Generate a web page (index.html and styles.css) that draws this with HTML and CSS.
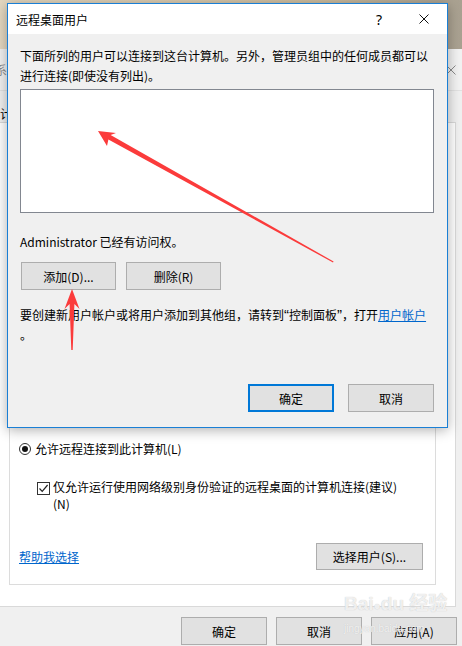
FILE: index.html
```html
<!DOCTYPE html>
<html lang="zh-CN">
<head>
    <meta charset="UTF-8">
    <title>远程桌面用户</title>
    <link rel="stylesheet" href="styles.css">
</head>
<body>
    <div class="desktop"></div>

    <div class="win">
        <div class="win-title">
            <span class="win-name">系统属性</span>
            <svg class="win-close" width="10" height="10" viewBox="0 0 10 10"><path d="M0.5 0.5L9.5 9.5M9.5 0.5L0.5 9.5" stroke="#8a8a8a" stroke-width="1"/></svg>
        </div>
        <div class="win-tabs"><span class="tab">计算机名</span></div>
        <div class="win-page">
            <div class="group">
                <div class="radio-row"><span class="radio"></span>允许远程连接到此计算机(L)</div>
                <div class="check-row">
                    <span class="check"><svg width="11" height="11" viewBox="0 0 11 11"><path d="M1.5 5.5L4.2 8.3L9.6 2" fill="none" stroke="#222" stroke-width="1.2"/></svg></span>
                    <span>仅允许运行使用网络级别身份验证的远程桌面的计算机连接(建议)<br>(N)</span>
                </div>
                <div class="users-row">
                    <a class="link" href="#">帮助我选择</a>
                    <button class="btn btn-users">选择用户(S)...</button>
                </div>
            </div>
        </div>
        <div class="win-footer">
            <button class="btn btn-win">确定</button>
            <button class="btn btn-win">取消</button>
            <button class="btn btn-win">应用(A)</button>
        </div>
    </div>

    <div class="dialog">
        <div class="dlg-title">
            <span class="dlg-name">远程桌面用户</span>
            <span class="dlg-help">?</span>
            <svg class="dlg-close" width="10" height="10" viewBox="0 0 10 10"><path d="M0.5 0.5L9.5 9.5M9.5 0.5L0.5 9.5" stroke="#111" stroke-width="1"/></svg>
        </div>
        <div class="dlg-body">
            <p class="intro">下面所列的用户可以连接到这台计算机。另外，管理员组中的任何成员都可以进行连接(即使没有列出)。</p>
            <div class="user-list"></div>
            <p class="has-access">Administrator 已经有访问权。</p>
            <div class="list-btns">
                <button class="btn btn-list">添加(D)...</button>
                <button class="btn btn-list">删除(R)</button>
            </div>
            <p class="note"><span class="nowrap">要创建新用户帐户或将用户添加到其他组，请转到<span class="q">“</span>控制面板<span class="q">”</span>，打开<a class="link" href="#">用户帐户</a></span><br>。</p>
            <div class="dlg-footer">
                <button class="btn btn-dlg btn-default">确定</button>
                <button class="btn btn-dlg">取消</button>
            </div>
        </div>
    </div>

    <svg class="marks" width="462" height="646" viewBox="0 0 462 646">
        <polygon fill="#fb3b3b" points="98,131 107,146 108.4,139.6 333,262.5 333.6,261.5 110.6,135 116,133"/>
        <polygon fill="#fb3b3b" points="72,289 64.5,309 69.6,304 71.3,350 72.7,350 74.4,304 79.5,309"/>
    </svg>

    <div class="watermark">
        <span class="wm-big">Bai<span class="paw">&#9679;</span>du 经验</span>
        <span class="wm-small">jingyan.baidu.com</span>
    </div>
</body>
</html>
```

FILE: styles.css
```css
*{
    box-sizing: border-box;
}
body{
    margin: 0;
    width: 462px;
    height: 646px;
    overflow: hidden;
    position: relative;
    background-color: #f0f0f0;
    font-family: "Noto Sans CJK SC", "Noto Sans", sans-serif;
    font-size: 12px;
    color: #000;
}
p{
    margin: 0;
}
.link{
    color: #0066cc;
    text-decoration: underline;
}
.btn{
    font-family: inherit;
    font-size: 12px;
    color: #000;
    background-color: #e1e1e1;
    border: 1px solid #adadad;
    padding: 0;
    height: 28px;
}

/* desktop + window behind */
.desktop{
    height: 49px;
    background: linear-gradient(90deg, #e4d8c1 0%, #dccdb2 35%, #cdbd9f 70%, #a9a191 100%);
}
.win-title{
    height: 41px;
    background-color: #f2f2f2;
    display: flex;
    align-items: center;
    justify-content: space-between;
    padding-right: 6px;
}
.win-name{
    margin-left: -5px;
    color: #8c8c8c;
}
.win-tabs{
    height: 32px;
    display: flex;
    align-items: center;
    padding-top: 14px;
    border-top: 1px solid #e2e2e2;
}
.tab{
    line-height: 17px;
}
.win-page{
    width: 456px;
    height: 485px;
    background-color: #fff;
    border-top: 1px solid #d9d9d9;
    border-right: 1px solid #d9d9d9;
    border-bottom: 1px solid #d9d9d9;
}
.group{
    margin: 277px 0 0 9px;
    width: 427px;
    border: 1px solid #dcdcdc;
    padding: 39px 12px 14px 9px;
    line-height: 17px;
}
.radio-row{
    display: flex;
    align-items: center;
    gap: 4px;
}
.radio{
    width: 12px;
    height: 12px;
    border: 1px solid #333;
    border-radius: 50%;
    display: flex;
    align-items: center;
    justify-content: center;
}
.radio::after{
    content: "";
    width: 6px;
    height: 6px;
    border-radius: 50%;
    background-color: #111;
}
.check-row{
    margin: 21px 0 0 18px;
    display: flex;
    gap: 3px;
}
.check{
    width: 13px;
    height: 13px;
    margin-top: 4px;
    border: 1px solid #333;
    background-color: #fff;
    display: flex;
    align-items: center;
    justify-content: center;
}
.users-row{
    margin-top: 31px;
    display: flex;
    justify-content: space-between;
    align-items: center;
}
.btn-users{
    width: 107px;
    height: 27px;
}
.win-footer{
    height: 40px;
    padding: 10px 5px 0 0;
    display: flex;
    justify-content: flex-end;
    gap: 9px;
}
.btn-win{
    width: 86px;
}

/* dialog on top */
.dialog{
    position: absolute;
    left: 7px;
    top: 3px;
    width: 441px;
    height: 425px;
    border: 1px solid #1a7fd5;
    background-color: #f0f0f0;
    display: flex;
    flex-direction: column;
    box-shadow: 0 2px 12px rgba(0, 0, 0, 0.32);
}
.dlg-title{
    height: 30px;
    background-color: #fff;
    display: flex;
    align-items: center;
    padding: 0 18px 0 8px;
}
.dlg-name{
    flex: 1;
}
.dlg-help{
    width: 12px;
    text-align: center;
    font-family: "Noto Sans", sans-serif;
    font-size: 14px;
    margin-right: 34px;
}
.dlg-body{
    flex: 1;
    display: flex;
    flex-direction: column;
    padding: 12px 13px 15px 12px;
    line-height: 20px;
}
.user-list{
    margin-top: 3px;
    height: 124px;
    background-color: #fff;
    border: 1px solid #828790;
}
.has-access{
    margin-top: 19px;
}
.list-btns{
    margin: 10px 0 0 1px;
    display: flex;
    gap: 10px;
}
.btn-list{
    width: 95px;
}
.note{
    margin-top: 15px;
}
.nowrap{
    white-space: nowrap;
}
.q{
    font-family: "Liberation Sans", sans-serif;
    font-size: 15px;
}
.dlg-footer{
    margin-top: auto;
    display: flex;
    justify-content: flex-end;
    gap: 14px;
}
.btn-dlg{
    width: 86px;
}
.btn-default{
    border: 2px solid #0078d7;
}

/* annotations */
.marks{
    position: absolute;
    left: 0;
    top: 0;
}
.watermark{
    position: absolute;
    left: 344px;
    top: 592px;
    display: flex;
    flex-direction: column;
    color: rgba(255, 255, 255, 0.75);
    text-shadow: 0 0 1px #bdbdbd;
    font-family: "Liberation Sans", "Noto Sans CJK SC", sans-serif;
}
.wm-big{
    font-size: 19px;
    font-weight: 700;
    line-height: 24px;
}
.paw{
    font-size: 12px;
}
.wm-small{
    font-size: 10px;
    line-height: 14px;
    margin-top: 4px;
}
```
